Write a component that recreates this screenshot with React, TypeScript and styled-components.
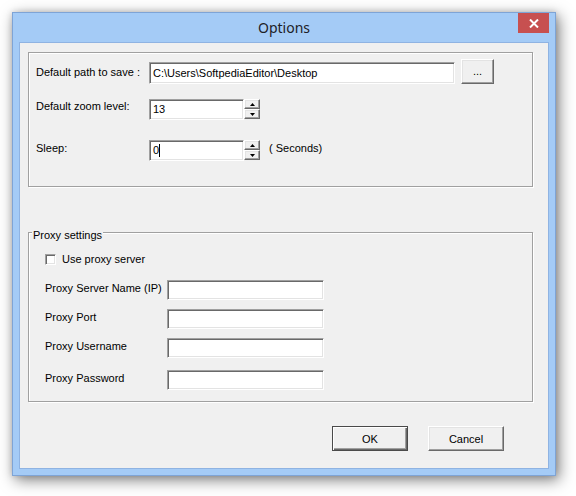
import React from 'react';
import styled, { createGlobalStyle } from 'styled-components';

const GlobalStyle = createGlobalStyle`
  html, body {
    margin: 0;
    padding: 0;
    background: #ffffff;
  }
  body {
    font-family: 'Liberation Sans', Arial, sans-serif;
    font-size: 11px;
    color: #000000;
  }
  * {
    box-sizing: border-box;
  }
`;

const Desktop = styled.div`
  width: 576px;
  height: 496px;
  padding: 12px 0 0 12px;
`;

const Window = styled.div`
  width: 544px;
  height: 464px;
  display: flex;
  flex-direction: column;
  background: #a4cbf6;
  border: 1px solid #7ea4d6;
  padding: 0 6px 6px;
  box-shadow: 3px 4px 14px rgba(0, 0, 0, 0.5), 0 0 6px rgba(0, 0, 0, 0.15);
`;

const TitleBar = styled.div`
  height: 29px;
  display: grid;
  grid-template-columns: 1fr auto 1fr;
  align-items: center;
`;

const Title = styled.div`
  grid-column: 2;
  font-family: 'Noto Sans', 'Open Sans', sans-serif;
  font-size: 14px;
  color: #1e2126;
  padding-bottom: 1px;
`;

const CloseButton = styled.div`
  grid-column: 3;
  justify-self: end;
  align-self: start;
  width: 31px;
  height: 20px;
  background: #c75050;
  display: flex;
  align-items: center;
  justify-content: center;
`;

const Client = styled.div`
  flex: 1;
  background: #f0f0f0;
  border: 1px solid #8fb3e2;
  padding: 9px 0 0 8px;
  display: flex;
  flex-direction: column;
`;

const etched = `
  border: 1px solid #a0a0a0;
  box-shadow: inset 1px 1px 0 #ffffff, 1px 1px 0 #ffffff;
`;

const Group = styled.div`
  width: 505px;
  height: 135px;
  ${etched}
  padding: 6px 0 0 7px;
  display: flex;
  flex-direction: column;
`;

const Row = styled.div<{ $height: number; $gap?: number }>`
  display: flex;
  align-items: flex-start;
  height: ${(p) => p.$height}px;
  margin-top: ${(p) => p.$gap || 0}px;
`;

const FieldLabel = styled.div<{ $width: number; $pad?: number }>`
  width: ${(p) => p.$width}px;
  padding-top: ${(p) => p.$pad || 0}px;
  line-height: 13px;
  white-space: nowrap;
`;

const TextBox = styled.div<{ $width: number; $height: number; $top?: number }>`
  width: ${(p) => p.$width}px;
  height: ${(p) => p.$height}px;
  margin-top: ${(p) => p.$top || 0}px;
  background: #ffffff;
  border: 1px solid;
  border-color: #a0a0a0 #ffffff #ffffff #a0a0a0;
  box-shadow: inset 1px 1px 0 #696969, inset -1px -1px 0 #e3e3e3;
  padding: 0 3px;
  display: flex;
  align-items: center;
  line-height: 13px;
  white-space: nowrap;
  overflow: hidden;
`;

const Caret = styled.span`
  display: inline-block;
  width: 1px;
  height: 13px;
  background: #000000;
`;

const raised = `
  background: #f0f0f0;
  border: 1px solid;
  border-color: #ffffff #696969 #696969 #ffffff;
  box-shadow: inset -1px -1px 0 #a0a0a0, inset 1px 1px 0 #e3e3e3;
`;

const BrowseButton = styled.div`
  width: 33px;
  height: 25px;
  margin-left: 6px;
  ${raised}
  display: flex;
  align-items: center;
  justify-content: center;
  padding-bottom: 2px;
`;

const Spinner = styled.div`
  width: 16px;
  height: 20px;
  display: flex;
  flex-direction: column;
`;

const SpinButton = styled.div`
  flex: 1;
  ${raised}
  display: flex;
  align-items: center;
  justify-content: center;
`;

const Hint = styled.div`
  margin-left: 9px;
  padding-top: 2px;
  line-height: 13px;
`;

const ProxyGroup = styled.fieldset`
  width: 505px;
  margin: 36px 0 0 0;
  padding: 0;
  min-inline-size: 0;
  ${etched}
`;

const Legend = styled.legend`
  margin-left: 3px;
  padding: 6px 1px 0 1px;
  line-height: 13px;
  background: #f0f0f0;
`;

const ProxyBody = styled.div`
  padding: 11px 0 11px 16px;
  display: flex;
  flex-direction: column;
`;

const CheckRow = styled.label`
  display: flex;
  align-items: center;
  height: 12px;
  gap: 6px;
  line-height: 13px;
`;

const CheckBox = styled.span`
  width: 11px;
  height: 11px;
  background: #ffffff;
  border: 1px solid;
  border-color: #a0a0a0 #ffffff #ffffff #a0a0a0;
  box-shadow: inset 1px 1px 0 #696969, inset -1px -1px 0 #e3e3e3;
`;

const ButtonRow = styled.div`
  display: flex;
  justify-content: flex-end;
  gap: 20px;
  margin-top: 24px;
  padding-right: 44px;
`;

const DialogButton = styled.div<{ $default?: boolean }>`
  width: 76px;
  height: 25px;
  display: flex;
  align-items: center;
  justify-content: center;
  background: #f0f0f0;
  border: 1px solid;
  border-color: ${(p) =>
    p.$default ? '#4a4a4a' : '#ffffff #696969 #696969 #ffffff'};
  box-shadow: ${(p) =>
    p.$default
      ? 'inset 1px 1px 0 #ffffff, inset -1px -1px 0 #696969, inset -2px -2px 0 #a0a0a0'
      : 'inset -1px -1px 0 #a0a0a0, inset 1px 1px 0 #e3e3e3'};
`;

const Arrow = ({ down }: { down?: boolean }) => (
  <svg width="5" height="3" viewBox="0 0 5 3">
    <polygon points={down ? '0,0 5,0 2.5,3' : '0,3 5,3 2.5,0'} fill="#000" />
  </svg>
);

const SpinBox = () => (
  <Spinner>
    <SpinButton>
      <Arrow />
    </SpinButton>
    <SpinButton>
      <Arrow down />
    </SpinButton>
  </Spinner>
);

const proxyFields = [
  { label: 'Proxy Server Name (IP)', gap: 15 },
  { label: 'Proxy Port', gap: 9 },
  { label: 'Proxy Username', gap: 9 },
  { label: 'Proxy Password', gap: 12 },
];

export default function App() {
  return (
    <>
      <GlobalStyle />
      <Desktop>
        <Window>
          <TitleBar>
            <Title>Options</Title>
            <CloseButton>
              <svg width="10" height="9" viewBox="0 0 10 9">
                <path d="M1 0.5 L9 8.5 M9 0.5 L1 8.5" stroke="#fff" strokeWidth="2" />
              </svg>
            </CloseButton>
          </TitleBar>
          <Client>
            <Group>
              <Row $height={25}>
                <FieldLabel $width={113} $pad={7}>
                  Default path to save :
                </FieldLabel>
                <TextBox $width={306} $height={22} $top={3}>
                  C:\Users\SoftpediaEditor\Desktop
                </TextBox>
                <BrowseButton>...</BrowseButton>
              </Row>
              <Row $height={21} $gap={15}>
                <FieldLabel $width={113} $pad={1}>
                  Default zoom level:
                </FieldLabel>
                <TextBox $width={95} $height={21}>
                  13
                </TextBox>
                <SpinBox />
              </Row>
              <Row $height={21} $gap={20}>
                <FieldLabel $width={113} $pad={2}>
                  Sleep:
                </FieldLabel>
                <TextBox $width={95} $height={21}>
                  0<Caret />
                </TextBox>
                <SpinBox />
                <Hint>( Seconds)</Hint>
              </Row>
            </Group>

            <ProxyGroup>
              <Legend>Proxy settings</Legend>
              <ProxyBody>
                <CheckRow>
                  <CheckBox />
                  Use proxy server
                </CheckRow>
                {proxyFields.map((f) => (
                  <Row key={f.label} $height={20} $gap={f.gap}>
                    <FieldLabel $width={122} $pad={2}>
                      {f.label}
                    </FieldLabel>
                    <TextBox $width={157} $height={20} />
                  </Row>
                ))}
              </ProxyBody>
            </ProxyGroup>

            <ButtonRow>
              <DialogButton $default>OK</DialogButton>
              <DialogButton>Cancel</DialogButton>
            </ButtonRow>
          </Client>
        </Window>
      </Desktop>
    </>
  );
}
